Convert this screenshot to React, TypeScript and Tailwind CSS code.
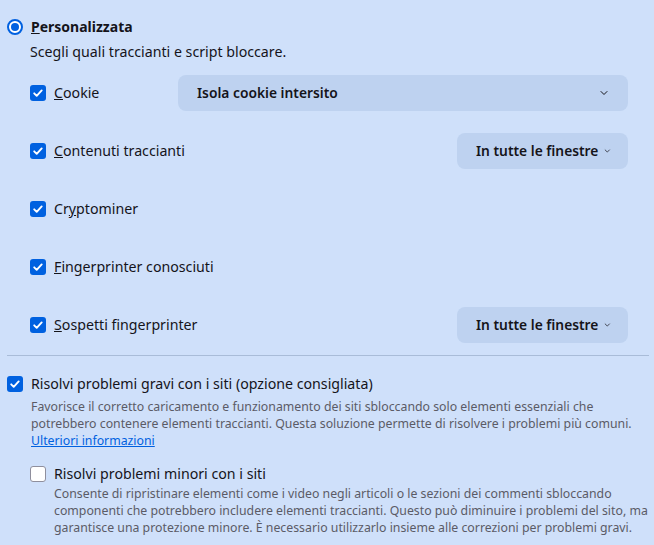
import { ChevronDown } from 'lucide-react';

function Check({ checked = true }: { checked?: boolean }) {
  if (!checked) {
    return <div className="w-[16px] h-[16px] shrink-0 rounded-[3px] border border-[#8f8f9d] bg-white" />;
  }
  return (
    <div className="w-[16px] h-[16px] shrink-0 rounded-[3px] bg-[#0061e0] flex items-center justify-center">
      <svg width="12" height="12" viewBox="0 0 12 12" fill="none">
        <path d="M2.2 6.3l2.5 2.5 5-5.4" stroke="white" strokeWidth="1.9" strokeLinecap="round" strokeLinejoin="round" />
      </svg>
    </div>
  );
}

function Select({ label, wide }: { label: string; wide?: boolean }) {
  return (
    <div
      className={`h-[36px] rounded-[8px] bg-[#bed2f0] flex items-center whitespace-nowrap text-[13.8px] font-semibold text-[#15141a] ${
        wide ? 'flex-1 pl-[19px] pr-[18px] justify-between' : 'ml-auto w-[171px] pl-[19px] pr-[16px] gap-[5px]'
      }`}
    >
      <span>{label}</span>
      <ChevronDown className="w-[12px] h-[12px] text-[#15141a]" strokeWidth={2} />
    </div>
  );
}

type Row = { label: React.ReactNode; select?: string; wide?: boolean };

const rows: Row[] = [
  { label: <><u>C</u>ookie</>, select: 'Isola cookie intersito', wide: true },
  { label: <><u>C</u>ontenuti traccianti</>, select: 'In tutte le finestre' },
  { label: <>Cr<u>y</u>ptominer</> },
  { label: <><u>F</u>ingerprinter conosciuti</> },
  { label: <><u>S</u>ospetti fingerprinter</>, select: 'In tutte le finestre' },
];

export default function App() {
  return (
    <div className="w-[654px] h-[545px] overflow-hidden bg-[#cfe0fa] text-[14.2px] leading-[20px] text-[#15141a] font-['Segoe_UI','Noto_Sans',sans-serif]">
      <div className="pt-[17px] pl-[7px] pr-[26px]">
        <div className="flex items-center gap-[8px] h-[20px]">
          <div className="w-[16px] h-[16px] rounded-full border-2 border-[#0061e0] bg-white flex items-center justify-center">
            <div className="w-[8px] h-[8px] rounded-full bg-[#0061e0]" />
          </div>
          <span className="font-bold text-[14px]">
            <u>P</u>ersonalizzata
          </span>
        </div>
        <div className="pl-[23px] mt-[5px]">Scegli quali traccianti e script bloccare.</div>
        <div className="pl-[23px] mt-[13px] flex flex-col gap-[22px]">
          {rows.map((r, i) => (
            <div key={i} className="flex items-center h-[36px]">
              <div className={`flex items-center gap-[8px] ${r.wide ? 'w-[148px]' : ''}`}>
                <Check />
                <span>{r.label}</span>
              </div>
              {r.select && <Select label={r.select} wide={r.wide} />}
            </div>
          ))}
        </div>
      </div>

      <div className="ml-[7px] mr-[5px] mt-[12px] h-px bg-[#a9bcd8]" />

      <div className="pl-[7px] pr-[10px] pt-[18px]">
        <div className="flex gap-[8px]">
          <div className="h-[20px] flex items-center">
            <Check />
          </div>
          <div>
            <div>Risolvi problemi gravi con i siti (opzione consigliata)</div>
            <p className="mt-[4px] text-[12.3px] leading-[17px] text-[#5b5b66] whitespace-nowrap">
              Favorisce il corretto caricamento e funzionamento dei siti sbloccando solo elementi essenziali che
              <br />
              potrebbero contenere elementi traccianti. Questa soluzione permette di risolvere i problemi più comuni.
              <br />
              <a className="text-[#0061e0] underline">Ulteriori informazioni</a>
            </p>
          </div>
        </div>
        <div className="flex gap-[8px] pl-[23px] mt-[15px]">
          <div className="h-[20px] flex items-center">
            <Check checked={false} />
          </div>
          <div>
            <div>Risolvi problemi minori con i siti</div>
            <p className="mt-[1px] text-[12.3px] leading-[17px] text-[#5b5b66] whitespace-nowrap">
              Consente di ripristinare elementi come i video negli articoli o le sezioni dei commenti sbloccando
              <br />
              componenti che potrebbero includere elementi traccianti. Questo può diminuire i problemi del sito, ma
              <br />
              garantisce una protezione minore. È necessario utilizzarlo insieme alle correzioni per problemi gravi.
            </p>
          </div>
        </div>
      </div>
    </div>
  );
}
